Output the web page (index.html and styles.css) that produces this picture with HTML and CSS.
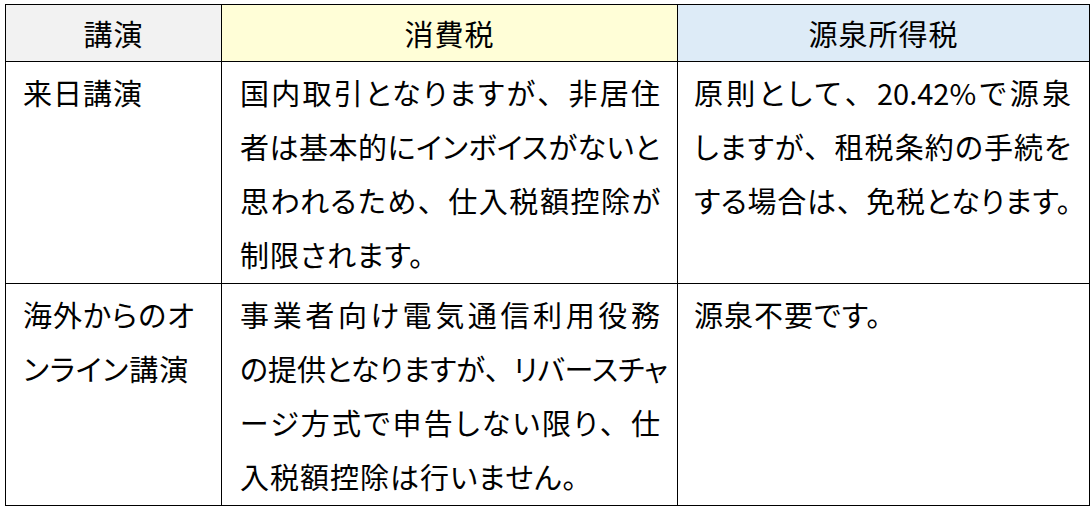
FILE: index.html
```html
<!DOCTYPE html>
<html lang="ja">
<head>
<meta charset="utf-8">
<title>講演の税務</title>
<link rel="stylesheet" href="styles.css">
</head>
<body>
<table class="tax-table">
  <colgroup>
    <col class="c1">
    <col class="c2">
    <col class="c3">
  </colgroup>
  <thead>
    <tr>
      <th class="h-grey">講演</th>
      <th class="h-yellow">消費税</th>
      <th class="h-blue">源泉所得税</th>
    </tr>
  </thead>
  <tbody>
    <tr class="row">
      <td class="cell cell-a">
        <span class="ln">来日講演</span>
      </td>
      <td class="cell cell-b">
        <span class="ln j">国内取引となりますが<span class="fw">、</span>非居住</span>
        <span class="ln j">者は基本的にインボイスがないと</span>
        <span class="ln j">思われるため<span class="fw">、</span>仕入税額控除が</span>
        <span class="ln">制限されます。</span>
      </td>
      <td class="cell cell-c">
        <span class="ln j">原則として<span class="fw">、</span>20.42%で源泉</span>
        <span class="ln j">しますが<span class="fw">、</span>租税条約の手続を</span>
        <span class="ln j">する場合は<span class="fw">、</span>免税となります。</span>
      </td>
    </tr>
    <tr class="row">
      <td class="cell cell-a">
        <span class="ln">海外からのオ</span>
        <span class="ln">ンライン講演</span>
      </td>
      <td class="cell cell-b">
        <span class="ln j">事業者向け電気通信利用役務</span>
        <span class="ln j">の提供となりますが<span class="fw">、</span>リバースチャ</span>
        <span class="ln j">ージ方式で申告しない限り<span class="fw">、</span>仕</span>
        <span class="ln">入税額控除は行いません。</span>
      </td>
      <td class="cell cell-c">
        <span class="ln">源泉不要です。</span>
      </td>
    </tr>
  </tbody>
</table>
</body>
</html>
```
FILE: styles.css
```css
html, body {
  margin: 0;
  padding: 0;
  background: #ffffff;
}

body {
  padding: 4px 0 0 5px;
  font-family: "Noto Sans CJK JP", "Noto Sans", sans-serif;
  color: #000000;
}

.tax-table {
  border-collapse: collapse;
  table-layout: fixed;
  width: 1084px;
  font-size: 29px;
  font-feature-settings: "palt" 1;
  letter-spacing: 1px;
}

.c1 { width: 216px; }
.c2 { width: 456px; }
.c3 { width: 412px; }

.tax-table th,
.tax-table td {
  border: 1px solid #000000;
}

.tax-table th {
  height: 56px;
  padding: 0;
  font-weight: normal;
  text-align: center;
  vertical-align: middle;
  line-height: 1;
}

.h-grey { background: #f2f2f2; }
.h-yellow { background: #fffed7; }
.h-blue { background: #ddebf7; }

.row {
  height: 222px;
}

.cell {
  vertical-align: top;
  padding: 3px 16px 0 17px;
  line-height: 54px;
}

.cell-b {
  padding-left: 18px;
  padding-right: 17px;
}

.cell-c {
  padding-left: 16px;
  padding-right: 18px;
}

.ln {
  display: block;
  white-space: nowrap;
}

.fw {
  font-feature-settings: normal;
  letter-spacing: 0;
}

.j {
  letter-spacing: 0;
  text-align: justify;
  text-align-last: justify;
  text-justify: inter-character;
}
```
